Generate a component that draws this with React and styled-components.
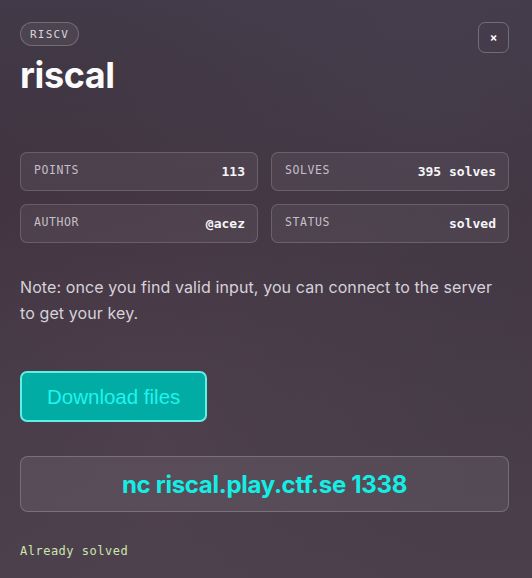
import React from "react";
import styled, { createGlobalStyle } from "styled-components";

const Global = createGlobalStyle`
  html, body { margin: 0; padding: 0; }
  body {
    width: 532px;
    height: 578px;
    overflow: hidden;
    background: #403644;
    font-family: Inter, "Noto Sans", sans-serif;
  }
`;

const Panel = styled.div`
  box-sizing: border-box;
  width: 532px;
  height: 578px;
  padding: 22px 23px 0 20px;
  background:
    radial-gradient(ellipse at 30% 75%, rgba(90, 70, 85, 0.35), transparent 60%),
    radial-gradient(ellipse at 80% 15%, rgba(75, 70, 85, 0.35), transparent 55%),
    linear-gradient(180deg, #423a48 0%, #40333f 35%, #463b47 70%, #4a3f4b 100%);
  color: #fff;
  display: flex;
  flex-direction: column;
`;

const Header = styled.div`
  display: flex;
  justify-content: space-between;
  align-items: flex-start;
`;

const TitleBlock = styled.div`
  display: flex;
  flex-direction: column;
  align-items: flex-start;
`;

const Tag = styled.span`
  box-sizing: border-box;
  height: 24px;
  padding: 0 9px;
  border-radius: 12px;
  border: 1px solid rgba(255, 255, 255, 0.22);
  background: rgba(255, 255, 255, 0.06);
  font-family: "DejaVu Sans Mono", monospace;
  font-size: 11px;
  letter-spacing: 1.2px;
  color: #d8d4dc;
  display: inline-flex;
  align-items: center;
`;

const Title = styled.h1`
  margin: 7px 0 0;
  font-size: 36px;
  line-height: 44px;
  font-weight: 700;
  letter-spacing: -0.4px;
  color: #fbfbfc;
`;

const CloseButton = styled.button`
  box-sizing: border-box;
  width: 31px;
  height: 31px;
  border-radius: 7px;
  border: 1px solid rgba(255, 255, 255, 0.25);
  background: transparent;
  color: #fff;
  font-family: "DejaVu Sans Mono", monospace;
  font-weight: 700;
  font-size: 12px;
  padding: 0;
  display: flex;
  align-items: center;
  justify-content: center;
`;

const Stats = styled.div`
  margin-top: 55px;
  display: grid;
  grid-template-columns: 1fr 1fr;
  gap: 13px 13px;
`;

const Stat = styled.div`
  box-sizing: border-box;
  height: 39px;
  padding: 0 12px 0 13px;
  border-radius: 7px;
  border: 1px solid rgba(255, 255, 255, 0.16);
  background: rgba(255, 255, 255, 0.055);
  display: flex;
  align-items: center;
  justify-content: space-between;
  font-family: "DejaVu Sans Mono", monospace;
`;

const StatLabel = styled.span`
  font-size: 11.5px;
  letter-spacing: 0.6px;
  color: #c4bfc8;
  margin-top: -4px;
`;

const StatValue = styled.span`
  font-size: 13px;
  font-weight: 700;
  color: #f6f5f7;
`;

const Note = styled.p`
  margin: 31px 0 0;
  font-size: 16px;
  line-height: 26px;
  letter-spacing: 0.1px;
  color: #d6d2da;
`;

const DownloadButton = styled.button`
  align-self: flex-start;
  box-sizing: border-box;
  margin-top: 45px;
  height: 51px;
  padding: 0 25px;
  border-radius: 7px;
  border: 2px solid #5df1e6;
  background: #00aca4;
  color: #1ff5ee;
  font-family: "Liberation Sans", Arial, sans-serif;
  font-size: 20.5px;
`;

const Command = styled.div`
  box-sizing: border-box;
  margin-top: 34px;
  height: 56px;
  border-radius: 8px;
  border: 1px solid rgba(255, 255, 255, 0.2);
  background: rgba(255, 255, 255, 0.07);
  display: flex;
  align-items: center;
  justify-content: center;
  font-size: 24px;
  font-weight: 700;
  letter-spacing: -0.3px;
  color: #12efe6;
`;

const Solved = styled.div`
  margin-top: 32px;
  font-family: "DejaVu Sans Mono", monospace;
  font-size: 12px;
  letter-spacing: 0.5px;
  color: #cbe7ad;
`;

const stats = [
  ["POINTS", "113"],
  ["SOLVES", "395 solves"],
  ["AUTHOR", "@acez"],
  ["STATUS", "solved"],
];

export default function App() {
  return (
    <>
      <Global />
      <Panel>
        <Header>
          <TitleBlock>
            <Tag>RISCV</Tag>
            <Title>riscal</Title>
          </TitleBlock>
          <CloseButton aria-label="close">×</CloseButton>
        </Header>
        <Stats>
          {stats.map(([label, value]) => (
            <Stat key={label}>
              <StatLabel>{label}</StatLabel>
              <StatValue>{value}</StatValue>
            </Stat>
          ))}
        </Stats>
        <Note>
          Note: once you find valid input, you can connect to the server to get your key.
        </Note>
        <DownloadButton>Download files</DownloadButton>
        <Command>nc riscal.play.ctf.se 1338</Command>
        <Solved>Already solved</Solved>
      </Panel>
    </>
  );
}
